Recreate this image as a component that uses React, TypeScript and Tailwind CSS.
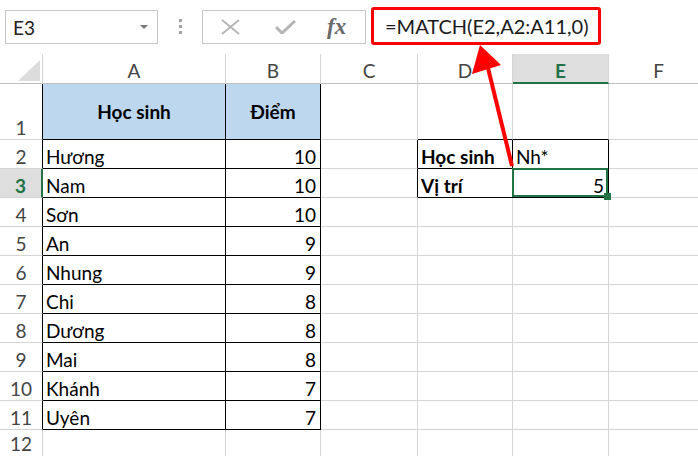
import React from 'react';

const students: [string, number][] = [
  ['Hương', 10],
  ['Nam', 10],
  ['Sơn', 10],
  ['An', 9],
  ['Nhung', 9],
  ['Chi', 8],
  ['Dương', 8],
  ['Mai', 8],
  ['Khánh', 7],
  ['Uyên', 7],
];

const colLetters = ['A', 'B', 'C', 'D', 'E', 'F'];
const rows = [1, 2, 3, 4, 5, 6, 7, 8, 9, 10, 11, 12];

const isRightBlack = (r: number, c: number) =>
  ((c === 0 || c === 1 || c === 2) && r >= 1 && r <= 11) ||
  ((c === 3 || c === 4 || c === 5) && r >= 2 && r <= 3);

const isBottomBlack = (r: number, c: number) =>
  ((c === 1 || c === 2) && r >= 1 && r <= 11) ||
  ((c === 4 || c === 5) && r >= 1 && r <= 3);

const Cell: React.FC<{ r: number; c: number }> = ({ r, c }) => {
  // last row is cut by the window edge
  const h = r === 1 ? 'h-[56px]' : r === 12 ? 'h-[26px]' : 'h-[29px]';
  const right = isRightBlack(r, c) ? 'border-r-black' : 'border-r-[#d4d4d4]';
  const bottom =
    r === 12 ? 'border-b-0' : isBottomBlack(r, c) ? 'border-b border-b-black' : 'border-b border-b-[#d4d4d4]';

  if (c === 0) {
    if (r === 3) {
      return (
        <div className={`${h} flex items-end justify-center pb-[2px] border-b border-b-[#d4d4d4] border-r-2 border-r-[#217346] bg-[#dedede] font-bold text-[#217346]`}>
          {r}
        </div>
      );
    }
    return (
      <div className={`${h} flex items-end justify-center ${r === 12 ? 'pb-[3px]' : 'pb-[2px]'} border-r ${bottom} ${right} text-[#444]`}>
        {r}
      </div>
    );
  }

  let content: React.ReactNode = null;
  let align = 'justify-start pl-[3px]';
  let extra = '';

  if (r === 1 && (c === 1 || c === 2)) {
    content = c === 1 ? 'Học sinh' : 'Điểm';
    align = 'justify-center items-center';
    extra = 'bg-[#bdd7ee] font-bold';
  } else if (r >= 2 && r <= 11 && c === 1) {
    content = students[r - 2][0];
  } else if (r >= 2 && r <= 11 && c === 2) {
    content = students[r - 2][1];
    align = 'justify-end pr-[4px]';
  } else if (r === 2 && c === 4) {
    content = 'Học sinh';
    extra = 'font-bold';
  } else if (r === 2 && c === 5) {
    content = 'Nh*';
  } else if (r === 3 && c === 4) {
    content = 'Vị trí';
    extra = 'font-bold';
  } else if (r === 3 && c === 5) {
    content = '5';
    align = 'justify-end pr-[4px]';
  }

  const vAlign = r === 1 && (c === 1 || c === 2) ? '' : 'items-end pb-[2px]';

  return (
    <div className={`${h} relative flex ${vAlign} ${align} border-r ${right} ${bottom} ${extra} text-black`}>
      {content}
      {r === 3 && c === 5 && (
        <>
          <div className="absolute z-10 -left-[1px] -top-[1px] right-0 bottom-0 border-2 border-[#217346]" />
          <div className="absolute z-10 -right-[3px] -bottom-[3px] w-[7px] h-[7px] bg-[#217346]" />
        </>
      )}
    </div>
  );
};

export default function App() {
  return (
    <div className="relative w-[698px] h-[456px] overflow-hidden bg-white font-['Lato',sans-serif] text-[19px] leading-none">
      {/* formula bar */}
      <div className="flex items-start h-[54px]">
        <div className="ml-[5px] mt-[10px] w-[153px] h-[34px] border border-[#c6c6c6] flex items-center justify-between pl-[7px] pr-[9px] text-[#222]">
          <span>E3</span>
          <svg width="8" height="4" viewBox="0 0 8 4">
            <polygon points="0,0 8,0 4,4" fill="#777" />
          </svg>
        </div>
        <div className="ml-[21px] mt-[19px] flex flex-col gap-[3px]">
          <div className="w-[3px] h-[3px] bg-[#a0a0a0]" />
          <div className="w-[3px] h-[3px] bg-[#a0a0a0]" />
          <div className="w-[3px] h-[3px] bg-[#a0a0a0]" />
        </div>
        <div className="ml-[20px] mt-[10px] w-[164px] h-[34px] border border-[#c6c6c6] flex items-center">
          <svg className="ml-[18px]" width="19" height="16" viewBox="0 0 19 16">
            <path d="M1 1 L18 15 M18 1 L1 15" stroke="#b4b4b4" strokeWidth="1.8" fill="none" />
          </svg>
          <svg className="ml-[35px]" width="21" height="14" viewBox="0 0 21 14">
            <path d="M1 7 L7 13 L20 1" stroke="#b4b4b4" strokeWidth="3" fill="none" />
          </svg>
          <span className="ml-[31px] font-['Liberation_Serif',serif] italic font-bold text-[23px] text-[#6a6a6a] -mt-[2px]">fx</span>
        </div>
        <div className="ml-[5px] mt-[7px] w-[230px] h-[38px] border-[3px] border-[#f00] rounded-[3px] flex items-center pl-[11px] text-[20px] text-[#1a1a1a]">
          =MATCH(E2,A2:A11,0)
        </div>
      </div>

      {/* sheet */}
      <div className="grid grid-cols-[43px_183px_95px_97px_95px_96px_100px]">
        <div className="h-[30px] flex items-end justify-end pr-[2px] pb-[2px] border-r border-b border-r-[#d4d4d4] border-b-[#bfbfbf]">
          <svg width="22" height="21" viewBox="0 0 22 21">
            <polygon points="22,0 22,21 0,21" fill="#dcdcdc" />
          </svg>
        </div>
        {colLetters.map((l) =>
          l === 'E' ? (
            <div key={l} className="h-[30px] flex items-end justify-center pb-[2px] border-r border-r-[#d4d4d4] border-b-2 border-b-[#217346] bg-[#dedede] font-bold text-[#217346]">
              {l}
            </div>
          ) : (
            <div key={l} className="h-[30px] flex items-end justify-center pb-[3px] border-r border-b border-r-[#d4d4d4] border-b-[#bfbfbf] text-[#444]">
              {l}
            </div>
          )
        )}
        {rows.map((r) =>
          [0, 1, 2, 3, 4, 5, 6].map((c) => <Cell key={`${r}-${c}`} r={r} c={c} />)
        )}
      </div>

      {/* red arrow */}
      <svg className="absolute inset-0 z-20 pointer-events-none" width="698" height="456" viewBox="0 0 698 456">
        <line x1="512" y1="166" x2="488" y2="68" stroke="#f00" strokeWidth="4" />
        <polygon points="480,45 472,74 501,65" fill="#f00" />
      </svg>
    </div>
  );
}
